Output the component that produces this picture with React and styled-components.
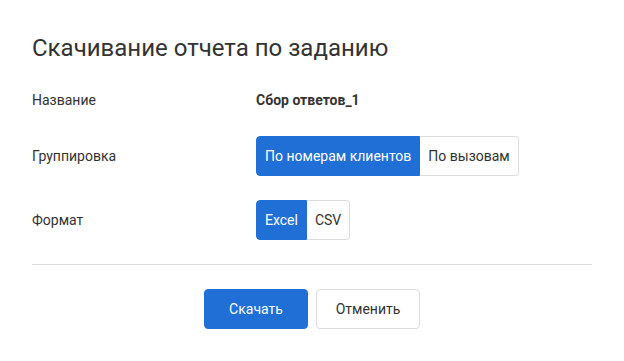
import React, { useState } from 'react';
import styled, { createGlobalStyle, css } from 'styled-components';

const GlobalStyle = createGlobalStyle`
  body {
    margin: 0;
    background: #fff;
    font-family: Roboto, "Liberation Sans", sans-serif;
    color: #333;
  }
`;

const Dialog = styled.div`
  width: 624px;
  height: 361px;
  box-sizing: border-box;
  padding: 32px 32px 0;
  display: flex;
  flex-direction: column;
`;

const Title = styled.h2`
  margin: 0 0 24px;
  font-size: 24px;
  font-weight: 400;
  line-height: 32px;
  color: #333;
`;

const Field = styled.div`
  display: grid;
  grid-template-columns: 224px 1fr;
  align-items: center;
  min-height: 24px;
  margin-bottom: 24px;
`;

const Label = styled.div`
  font-size: 14px;
  color: #333;
`;

const Value = styled.div`
  font-size: 14px;
  font-weight: 700;
  color: #333;
`;

const Segmented = styled.div`
  display: inline-flex;
  justify-self: start;
  height: 40px;
`;

const Segment = styled.button`
  font-family: inherit;
  font-size: 14px;
  height: 40px;
  padding: 0 8px;
  border: 1px solid #dcdcdc;
  background: #fff;
  color: #333;
  cursor: pointer;
  &:first-child {
    border-radius: 4px 0 0 4px;
  }
  &:last-child {
    border-radius: 0 4px 4px 0;
  }
  & + & {
    border-left: none;
  }
  ${({ $active }) =>
    $active &&
    css`
      background: #1f6fd6;
      border-color: #1f6fd6;
      color: #fff;
    `}
`;

const Divider = styled.hr`
  margin: 0 0 24px;
  border: none;
  border-top: 1px solid #dcdcdc;
`;

const Actions = styled.div`
  display: flex;
  justify-content: center;
  gap: 8px;
`;

const Button = styled.button`
  font-family: inherit;
  font-size: 14px;
  width: 104px;
  height: 40px;
  border-radius: 4px;
  border: 1px solid ${({ $primary }) => ($primary ? '#1f6fd6' : '#dcdcdc')};
  background: ${({ $primary }) => ($primary ? '#1f6fd6' : '#fff')};
  color: ${({ $primary }) => ($primary ? '#fff' : '#333')};
  cursor: pointer;
`;

export default function App() {
  const [group, setGroup] = useState('clients');
  const [format, setFormat] = useState('excel');

  return (
    <>
      <GlobalStyle />
      <Dialog>
        <Title>Скачивание отчета по заданию</Title>
        <Field>
          <Label>Название</Label>
          <Value>Сбор ответов_1</Value>
        </Field>
        <Field>
          <Label>Группировка</Label>
          <Segmented>
            <Segment $active={group === 'clients'} onClick={() => setGroup('clients')}>
              По номерам клиентов
            </Segment>
            <Segment $active={group === 'calls'} onClick={() => setGroup('calls')}>
              По вызовам
            </Segment>
          </Segmented>
        </Field>
        <Field>
          <Label>Формат</Label>
          <Segmented>
            <Segment $active={format === 'excel'} onClick={() => setFormat('excel')}>
              Excel
            </Segment>
            <Segment $active={format === 'csv'} onClick={() => setFormat('csv')}>
              CSV
            </Segment>
          </Segmented>
        </Field>
        <Divider />
        <Actions>
          <Button $primary>Скачать</Button>
          <Button>Отменить</Button>
        </Actions>
      </Dialog>
    </>
  );
}
